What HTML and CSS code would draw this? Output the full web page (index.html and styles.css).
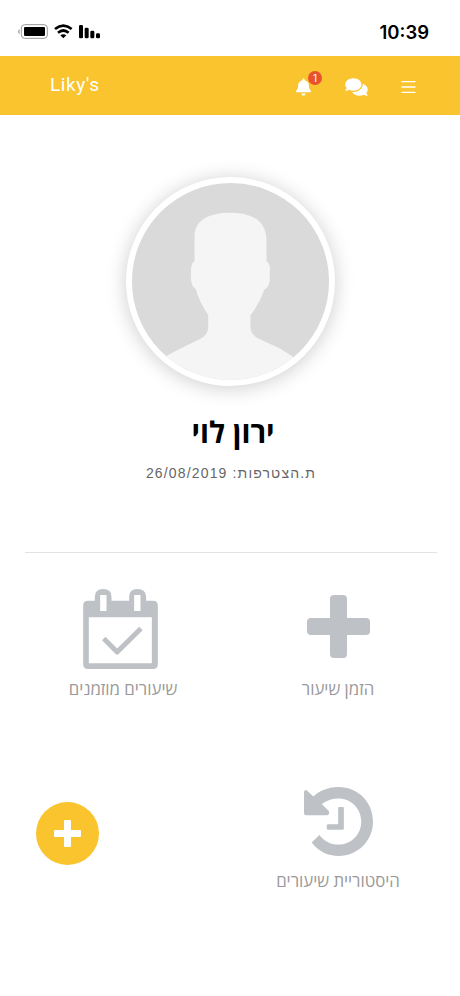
FILE: index.html
```html
<!DOCTYPE html>
<html lang="he" dir="rtl">
<head>
<meta charset="utf-8">
<meta name="viewport" content="width=device-width">
<title>Liky's</title>
<link rel="stylesheet" href="styles.css">
</head>
<body>
<div class="status">
  <time class="clock">10:39</time>
  <svg class="signals" viewBox="54 69 249 51">
    <path d="M59 88v14q-5-1-5-7t5-7z" fill="#aaa"/>
    <rect x="64" y="74" width="78" height="41" rx="10" fill="#fff" stroke="#999" stroke-width="3"/>
    <rect x="72" y="81" width="63" height="27" rx="4"/>
    <g fill="none" stroke="#000" stroke-width="8"><path d="M165 87q25-20 50 0"/><path d="M174 98q16-13 32 0"/></g>
    <path d="M181 106q9-7 18 0l-9 9z"/>
    <rect x="237" y="75" width="12" height="40" rx="4"/><rect x="254" y="83" width="12" height="32" rx="4"/><rect x="271" y="92" width="12" height="23" rx="4"/><rect x="288" y="100" width="12" height="15" rx="4"/>
  </svg>
</div>
<header class="bar">
  <nav class="actions">
    <svg class="menu" viewBox="0 0 42 36"><path d="M1.500 2h39M1.500 18h39M1.500 34h39" stroke="#fff" stroke-width="4" stroke-linecap="round"/></svg>
    <svg class="chat" viewBox="0 0 576 512"><path fill="#fff" d="M416 192c0-88.400-93.100-160-208-160S0 103.600 0 192c0 34.300 14.100 65.900 38 92-13.400 30.200-35.500 54.200-35.800 54.500-2.200 2.300-2.800 5.700-1.500 8.700S4.800 352 8 352c36.600 0 66.900-12.300 88.700-25 32.200 15.700 70.300 25 111.300 25 114.900 0 208-71.600 208-160zm122 220c23.900-26 38-57.700 38-92 0-66.900-53.500-124.200-129.300-148.100.900 6.600 1.300 13.300 1.300 20.100 0 105.900-107.700 192-240 192-10.800 0-21.300-.8-31.700-1.900C207.800 439.600 281.800 480 368 480c41 0 79.100-9.200 111.300-25 21.800 12.700 52.100 25 88.700 25 3.200 0 6.100-1.900 7.300-4.800 1.300-2.900.7-6.300-1.500-8.700-.3-.3-22.400-24.200-35.800-54.500z"/></svg>
    <span class="alerts">
      <svg class="bell" viewBox="0 0 448 512"><path fill="#fff" d="M224 512c35.320 0 63.970-28.650 63.970-64H160.030c0 35.350 28.650 64 63.970 64zm215.390-149.710c-19.320-20.760-55.470-51.990-55.470-154.290 0-77.700-54.480-139.900-127.940-155.160V32c0-17.670-14.320-32-31.980-32s-31.980 14.330-31.980 32v20.840C118.560 68.100 64.080 130.300 64.080 208c0 102.300-36.150 133.530-55.470 154.290-6 6.450-8.660 14.160-8.610 21.710.11 16.400 12.980 32 32.100 32h383.800c19.120 0 32-15.600 32.100-32 .05-7.550-2.610-15.270-8.610-21.710z"/></svg>
      <span class="badge">1</span>
    </span>
  </nav>
  <span class="brand" dir="ltr">Liky's</span>
</header>
<main>
  <section class="profile">
    <div class="avatar">
      <svg viewBox="67.500 69 591 591"><path fill="#f5f5f5" d="M150 599Q178 584 210 567L270 538Q296 525 296 503V465Q268 424 259 388C249 381 245 370 244 352L245 320Q246 309 255 304V228C256 180 298 158 362 158C430 158 471 184 471 242V303Q480 309 481 320V360Q479 381 464 390Q451 430 423 466V504Q425 525 448 536L510 565L570 602V670H150Z"/></svg>
    </div>
    <h1>ירון לוי</h1>
    <p class="joined">ת.הצטרפות: 26/08/2019</p>
  </section>
  <hr>
  <section class="tiles">
    <a class="tile">
      <span class="pic"><svg class="plus" viewBox="0 0 63 63"><path fill="#bec1c6" d="M27 0h9q4 0 4 4v19h19q4 0 4 4v9q0 4-4 4H40v19q0 4-4 4h-9q-4 0-4-4V40H4q-4 0-4-4v-9q0-4 4-4h19V4q0-4 4-4z"/></svg></span>
      <span class="label">הזמן שיעור</span>
    </a>
    <a class="tile">
      <span class="pic"><svg class="calendar" viewBox="99 27 224 240"><path fill="#bec1c6" fill-rule="evenodd" d="M113 62H134V50Q134 27 159 27T184 50V62H237V50Q237 27 262 27T288 50V62H309Q323 62 323 76V253Q323 267 309 267H113Q99 267 99 253V76Q99 62 113 62ZM116 112V250H305V112ZM150 45V93H169V45ZM252 45V93H271V45Z"/><path d="M166 181L201 216L267 151" fill="none" stroke="#bec1c6" stroke-width="15" stroke-linecap="square" stroke-linejoin="round"/></svg></span>
      <span class="label">שיעורים מוזמנים</span>
    </a>
    <a class="tile">
      <span class="pic"><svg class="history" viewBox="133 50 206 206"><path fill="#bec1c6" d="M133 66Q133 58 140 59L161 78C181 60 207 50 236 50C295 50 339 96 339 153S294 256 236 256C205 256 177 244 156 216L179 193C193 211 212 222 236 222C275 222 304 191 304 153S274 84 236 84C217 84 200 90 186 101L207 122Q211 131 203 134H139Q133 134 133 128Z"/><path fill="#bec1c6" d="M239 110H249Q252 110 252 113V174Q252 178 248 178H205Q201 178 201 174V165Q201 161 205 161H235V114Q235 110 239 110Z"/></svg></span>
      <span class="label">היסטוריית שיעורים</span>
    </a>
  </section>
</main>
<button class="fab" aria-label="הוספה"><svg viewBox="0 0 27 27"><path fill="#fff" d="M11 0h5q1 0 1 1v9h9q1 0 1 1v5q0 1-1 1h-9v9q0 1-1 1h-5q-1 0-1-1v-9H1q-1 0-1-1v-5q0-1 1-1h9V1q0-1 1-1z"/></svg></button>
</body>
</html>
```
FILE: styles.css
```css
* { box-sizing: border-box; }
body { margin: 0; height: 996px; overflow: hidden; background: #fff; font-family: "Open Sans", "Noto Sans", sans-serif; }
svg { display: block; }
.status { display: flex; justify-content: space-between; align-items: center; height: 56px; padding: 7px 31px 0 18px; }
.clock { font: 600 18.5px/24px Inter, sans-serif; }
.signals { width: 83px; height: 17px; }
.bar { display: flex; justify-content: space-between; align-items: center; height: 59px; padding: 0 44px 0 50px; background: #fac42e; color: #fff; }
.actions { display: flex; align-items: center; padding-top: 2px; }
.menu { width: 15px; height: 12px; }
.chat { width: 23px; height: 20px; margin-right: 33px; }
.alerts { position: relative; margin-right: 34px; }
.bell { width: 15px; height: 18px; }
.badge { position: absolute; left: 12px; top: -7px; width: 14px; height: 14px; border-radius: 50%; background: #e9522f; font: 10px/14px Inter, sans-serif; text-align: center; }
.brand { padding-bottom: 2px; font: 400 19px/24px Roboto, sans-serif; letter-spacing: .6px; }
.profile { display: flex; flex-direction: column; align-items: center; padding-top: 62px; height: 437px; }
.avatar { flex: none; width: 209px; height: 209px; margin-left: 1px; border: 6px solid #fff; border-radius: 50%; overflow: hidden; background: #dadada; box-shadow: 0 2px 20px rgba(0, 0, 0, .2); }
h1 { margin: 23px 0 0; padding-left: 6px; font-size: 29.5px; font-weight: 700; line-height: 46px; color: #000; }
.joined { margin: 6px 0 0; padding-left: 2px; font: 14px/24px "Liberation Sans", sans-serif; letter-spacing: 1.15px; color: #666; }
hr { height: 1px; margin: 0 23px 0 25px; border: 0; background: #e2e2e2; }
.tiles { display: grid; grid-template-columns: repeat(2, 215px); grid-template-rows: 192px 192px; justify-content: center; padding-top: 27px; }
.tile { display: flex; flex-direction: column; align-items: center; }
.pic { display: flex; align-items: center; justify-content: center; height: 98px; }
.plus { width: 63px; height: 63px; margin: 0 0 5px 2px; }
.calendar { width: 75px; height: 80px; margin-right: 5px; }
.history { width: 69px; height: 69px; margin-left: 2px; }
.label { margin-top: -1px; padding-left: 1px; font-size: 16.8px; line-height: 24px; color: #999; }
.fab { position: absolute; left: 36px; top: 802px; display: flex; align-items: center; justify-content: center; width: 63px; height: 63px; padding: 0; border: 0; border-radius: 50%; background: #fac42e; }
.fab svg { width: 27px; height: 27px; }
```
